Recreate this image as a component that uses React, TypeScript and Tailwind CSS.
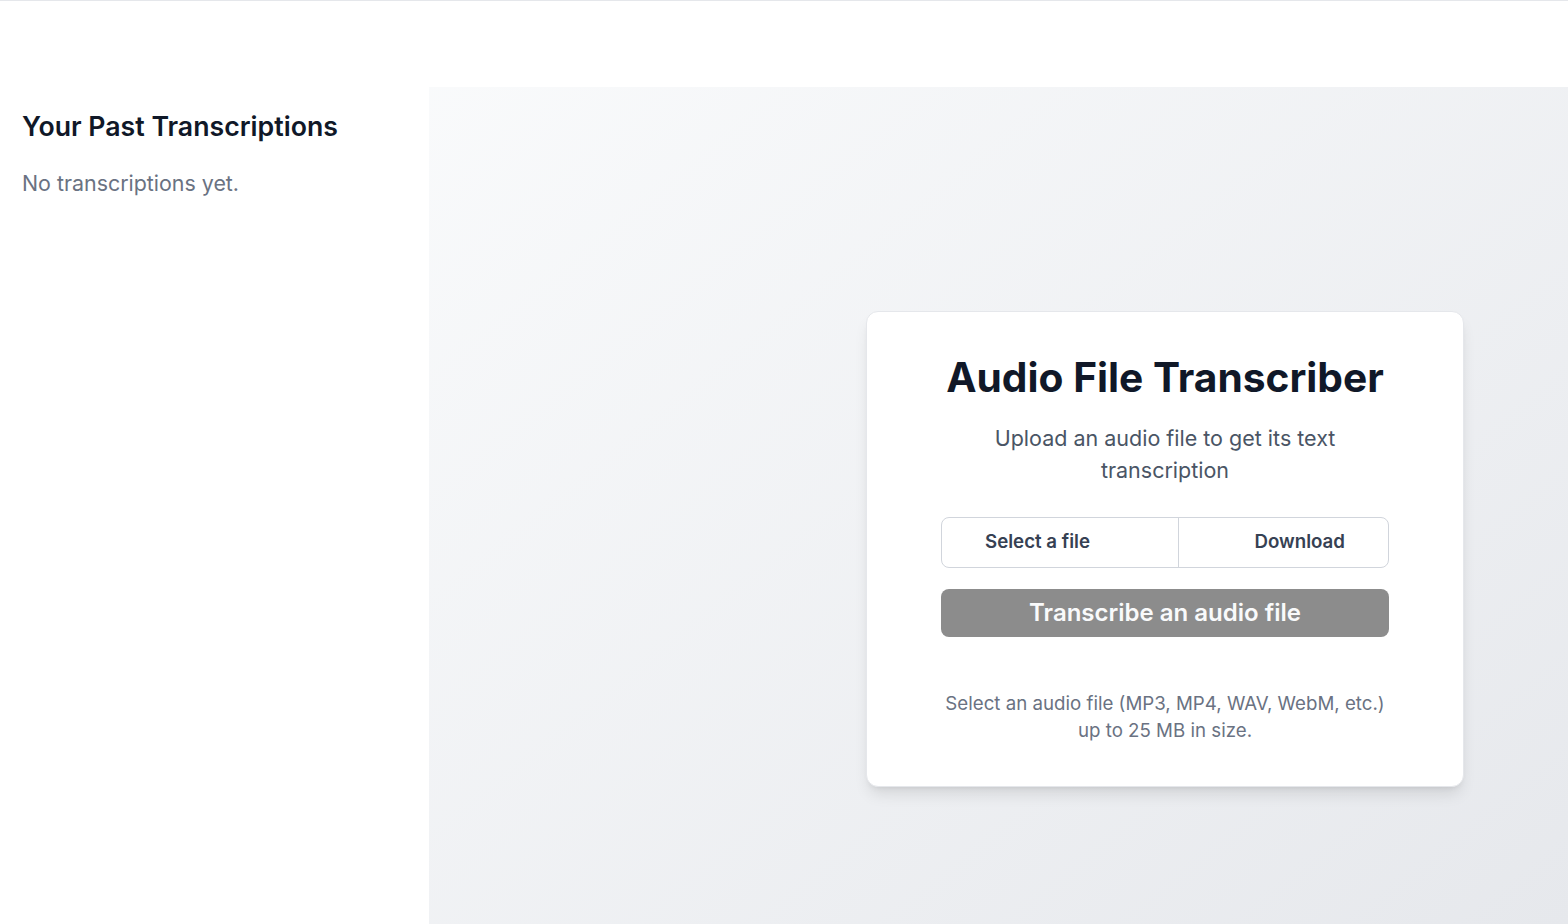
export default function App() {
  return (
    <div
      className="min-h-screen bg-white border-t border-gray-200"
      style={{ fontFamily: "Inter, 'Noto Sans', sans-serif" }}
    >
      <header className="h-[86px] bg-white" />

      <div className="flex">
        <aside className="w-[429px] shrink-0 bg-white px-[22px] pt-[23px]">
          <h2 className="text-[26.7px] leading-8 font-semibold text-gray-900">Your Past Transcriptions</h2>
          <p className="mt-[27px] text-[21.4px] leading-7 text-gray-500">No transcriptions yet.</p>
        </aside>

        <main className="flex-1 h-[924px] bg-gradient-to-br from-gray-50 to-gray-200 flex items-center justify-end pr-[104px]">
          <div className="w-[598px] bg-white rounded-xl border border-gray-200 shadow-lg px-[74px] pt-[42px] pb-[42px] text-center">
            <h1 className="text-[40.7px] leading-[48px] font-bold text-gray-900">Audio File Transcriber</h1>
            <p className="mt-5 text-[21.5px] leading-8 text-gray-600 px-2">
              Upload an audio file to get its text transcription
            </p>

            <div className="mt-[31px] flex h-[51px] border border-gray-300 rounded-lg text-[18.7px] font-semibold text-gray-700">
              <button className="w-[237px] text-left pl-[43px] border-r border-gray-300">
                Select a file
              </button>
              <button className="flex-1 text-right pr-[43px]">Download</button>
            </div>

            <button className="mt-[21px] w-full h-12 rounded-lg bg-[#8c8c8c] text-2xl font-semibold text-gray-50">
              Transcribe an audio file
            </button>

            <p className="mt-[53px] text-[18.7px] leading-[27px] text-gray-500">
              Select an audio file (MP3, MP4, WAV, WebM, etc.)
              <br />
              up to 25 MB in size.
            </p>
          </div>
        </main>
      </div>
    </div>
  );
}
